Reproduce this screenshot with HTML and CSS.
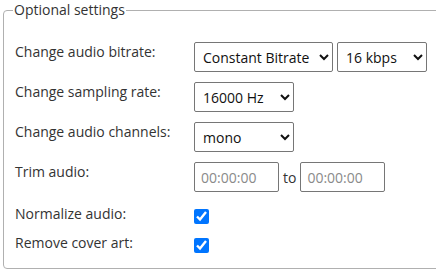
FILE: index.html
```html
<!DOCTYPE html>
<html lang="en">
<head>
    <meta charset="UTF-8">
    <meta name="viewport" content="width=device-width, initial-scale=1.0">
    <title>Optional settings</title>
    <link rel="stylesheet" href="styles.css">
</head>
<body>
    <fieldset class="settings">
        <legend>Optional settings</legend>

        <div class="row">
            <label for="bitrateMode">Change audio bitrate:</label>
            <div class="controls">
                <select id="bitrateMode" class="select-mode">
                    <option>Constant Bitrate</option>
                    <option>Variable Bitrate</option>
                </select>
                <select id="bitrate" class="select-rate">
                    <option>16 kbps</option>
                    <option>32 kbps</option>
                    <option>64 kbps</option>
                </select>
            </div>
        </div>

        <div class="row">
            <label for="sampling">Change sampling rate:</label>
            <div class="controls">
                <select id="sampling" class="select-short">
                    <option>16000 Hz</option>
                    <option>22050 Hz</option>
                    <option>44100 Hz</option>
                </select>
            </div>
        </div>

        <div class="row">
            <label for="channels">Change audio channels:</label>
            <div class="controls">
                <select id="channels" class="select-short">
                    <option>mono</option>
                    <option>stereo</option>
                </select>
            </div>
        </div>

        <div class="row">
            <label for="trimStart">Trim audio:</label>
            <div class="controls">
                <input type="text" id="trimStart" class="time" placeholder="00:00:00">
                <span class="to">to</span>
                <input type="text" id="trimEnd" class="time" placeholder="00:00:00">
            </div>
        </div>

        <div class="row check-row">
            <label for="normalize">Normalize audio:</label>
            <div class="controls">
                <input type="checkbox" id="normalize" checked>
            </div>
        </div>

        <div class="row check-row">
            <label for="cover">Remove cover art:</label>
            <div class="controls">
                <input type="checkbox" id="cover" checked>
            </div>
        </div>
    </fieldset>
</body>
</html>
```

FILE: styles.css
```css
html {
    overflow: hidden;
}

body {
    margin: 0;
    padding: 0 0 0 3px;
    font-family: "Open Sans", sans-serif;
    font-size: 14px;
    color: #333;
    background: white;
    overflow: hidden;
}

.settings {
    width: 460px;
    margin: 0;
    padding: 2px 11px 10px 11px;
    border: 1px solid #b0b0b0;
    border-radius: 4px;
    box-sizing: border-box;
    height: 269px;
}

.settings legend {
    font-size: 14px;
    line-height: 20px;
    padding: 0 1px;
    margin-left: -2px;
    color: #333;
}

.row {
    display: grid;
    grid-template-columns: 179px auto;
    align-items: start;
    margin-top: 10px;
}

.row:first-of-type {
    margin-top: 20px;
}

.row label {
    line-height: 20px;
}

.controls {
    display: flex;
    align-items: center;
}

select {
    height: 30px;
    font-family: "Open Sans", sans-serif;
    font-size: 14px;
    color: #111;
    background: white;
    border: 1px solid #767676;
    border-radius: 2px;
    padding: 0 4px;
}

.select-mode {
    width: 139px;
}

.select-rate {
    width: 90px;
    margin-left: 4px;
}

.select-short {
    width: 100px;
}

.time {
    width: 85px;
    height: 30px;
    box-sizing: border-box;
    font-family: "Open Sans", sans-serif;
    font-size: 14px;
    border: 1px solid #767676;
    border-radius: 2px;
    padding: 0 6px;
}

.time::placeholder {
    color: #8a8a8a;
}

.to {
    margin: 0 4px;
}

.check-row {
    margin-top: 12px;
}

.check-row + .check-row {
    margin-top: 9px;
}

input[type="checkbox"] {
    width: 15px;
    height: 15px;
    margin: 5px 0 0 0;
    accent-color: #0075ff;
}
```
